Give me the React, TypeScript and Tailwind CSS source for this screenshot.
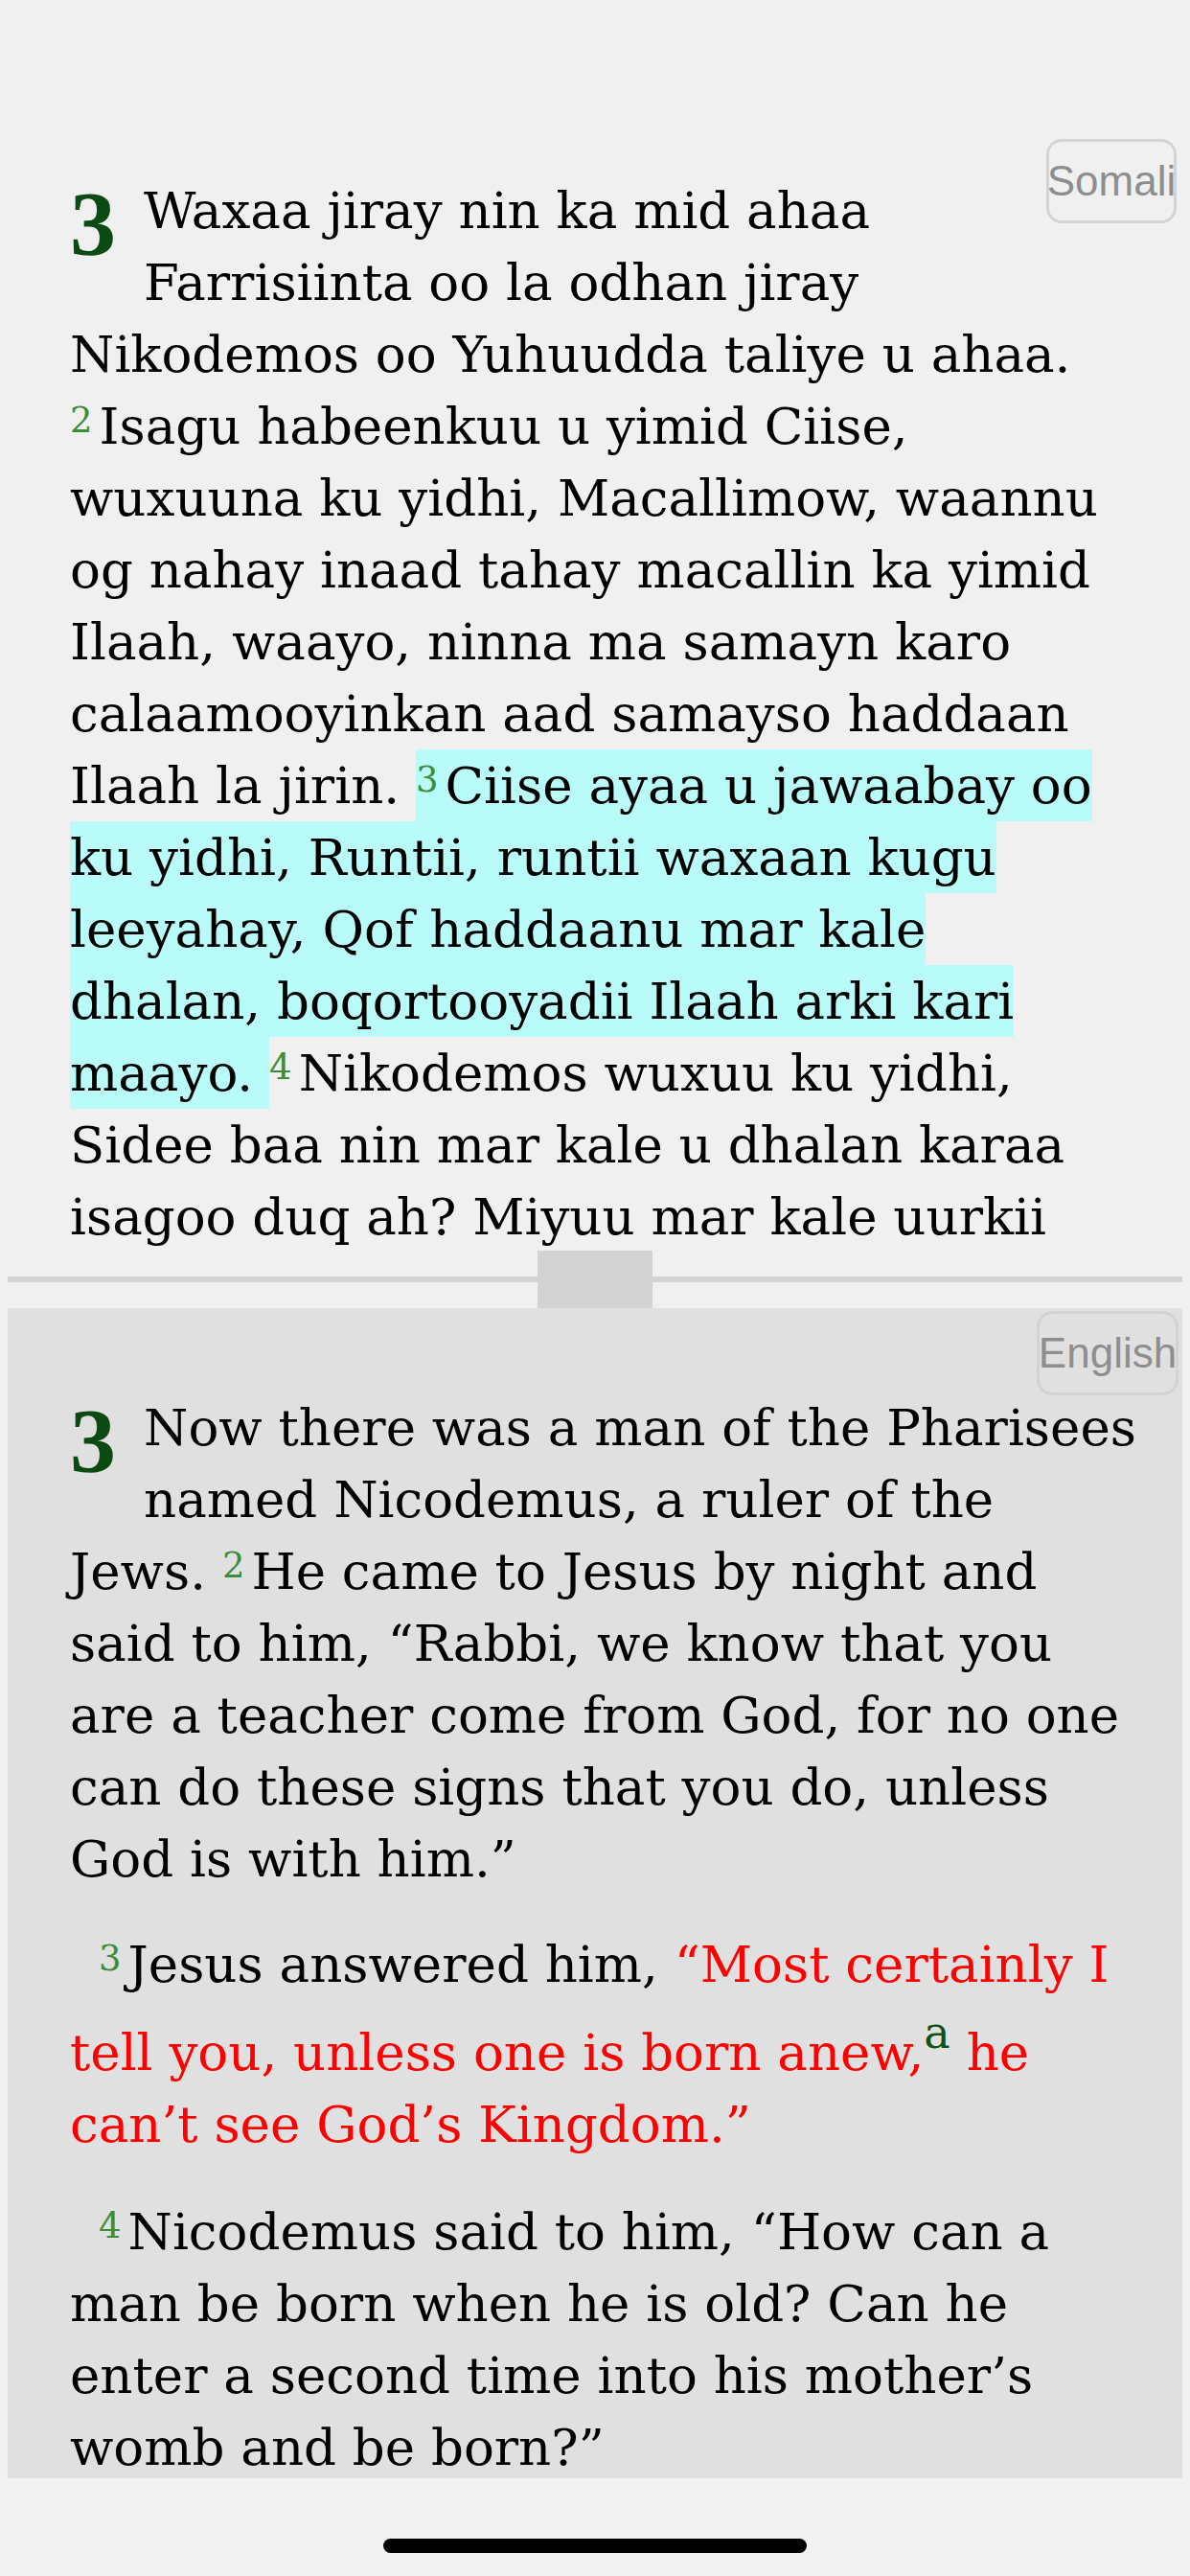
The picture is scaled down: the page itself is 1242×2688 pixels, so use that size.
import type { ReactNode } from 'react';

const serif = { fontFamily: '"DejaVu Serif", "Liberation Serif", serif' };

function Verse({ n }: { n: string }) {
  return (
    <span className="text-[37px] leading-none align-[12px] text-[#3a8d3a] mr-[7px]">{n}</span>
  );
}

function Chapter({ n }: { n: string }) {
  return (
    <div className="float-left w-[77px] h-[148px]">
      <span
        className="block mt-[4px] text-[96px] leading-[96px] font-bold text-[#0b4a12]"
        style={{ fontFamily: '"Liberation Serif", serif' }}
      >
        {n}
      </span>
    </div>
  );
}

function LangButton({ label, className }: { label: string; className: string }) {
  return (
    <button
      className={`absolute top-[3px] h-[88px] border-[3px] border-[#d3d3d3] rounded-[16px] flex items-center justify-center overflow-hidden text-[44px] text-[#8e8e8e] ${className}`}
      style={{ fontFamily: '"Liberation Sans", Arial, sans-serif' }}
    >
      {label}
    </button>
  );
}

function Text({ children }: { children: ReactNode }) {
  return (
    <div className="pl-[65px] pr-[10px] text-[53px] leading-[75px] text-black" style={serif}>
      {children}
    </div>
  );
}

export default function App() {
  return (
    <div className="w-[1242px] h-[2688px] bg-[#f0f0f0] flex flex-col overflow-hidden">
      <div className="h-[142px] shrink-0" />

      {/* Somali */}
      <div className="relative mx-[8px] h-[1163px] shrink-0 overflow-hidden">
        <Text>
          <p className="pt-[40px]">
            <Chapter n="3" />
            Waxaa jiray nin ka mid ahaa
            <br />
            Farrisiinta oo la odhan jiray
            <br />
            Nikodemos oo Yuhuudda taliye u ahaa.
            <br />
            <Verse n="2" />
            Isagu habeenkuu u yimid Ciise,
            <br />
            wuxuuna ku yidhi, Macallimow, waannu
            <br />
            og nahay inaad tahay macallin ka yimid
            <br />
            Ilaah, waayo, ninna ma samayn karo
            <br />
            calaamooyinkan aad samayso haddaan
            <br />
            Ilaah la jirin.{' '}
            <span className="bg-[#b9fbf8] py-[7px]">
              <Verse n="3" />
              Ciise ayaa u jawaabay oo
              <br />
              ku yidhi, Runtii, runtii waxaan kugu
              <br />
              leeyahay, Qof haddaanu mar kale
              <br />
              dhalan, boqortooyadii Ilaah arki kari
              <br />
              maayo.{' '}
            </span>
            <Verse n="4" />
            Nikodemos wuxuu ku yidhi,
            <br />
            Sidee baa nin mar kale u dhalan karaa
            <br />
            isagoo duq ah? Miyuu mar kale uurkii
            <br />
            hooyadiis mar labaad geli karaa, oo ma dhalan karaa?
          </p>
        </Text>
        <LangButton label="Somali" className="right-[6px] w-[136px]" />
      </div>

      {/* divider */}
      <div className="mx-[8px] h-[60px] shrink-0 flex items-center">
        <div className="flex-1 h-[6px] bg-[#d3d3d3]" />
        <div className="w-[120px] h-[60px] bg-[#d3d3d3]" />
        <div className="flex-1 h-[6px] bg-[#d3d3d3]" />
      </div>

      {/* English */}
      <div className="relative mx-[8px] h-[1221px] shrink-0 bg-[#e0e0e0] overflow-hidden">
        <Text>
          <p className="pt-[87px]">
            <Chapter n="3" />
            Now there was a man of the Pharisees
            <br />
            named Nicodemus, a ruler of the
            <br />
            Jews. <Verse n="2" />
            He came to Jesus by night and
            <br />
            said to him, “Rabbi, we know that you
            <br />
            are a teacher come from God, for no one
            <br />
            can do these signs that you do, unless
            <br />
            God is with him.”
          </p>
          <p className="mt-[35px] indent-[30px]">
            <Verse n="3" />
            Jesus answered him,{' '}
            <span className="text-[#ff0000]">
              “Most certainly I
              <br />
              tell you, unless one is born anew,
            </span>
            <span className="text-[46px] leading-[68px] align-[23px] text-[#0b5316]">a</span>
            <span className="text-[#ff0000]">
              {' '}he
              <br />
              can’t see God’s Kingdom.”
            </span>
          </p>
          <p className="mt-[37px] indent-[30px]">
            <Verse n="4" />
            Nicodemus said to him, “How can a
            <br />
            man be born when he is old? Can he
            <br />
            enter a second time into his mother’s
            <br />
            womb and be born?”
          </p>
          <p className="mt-[37px] indent-[30px]">
            <Verse n="5" />
            Jesus answered, “Most certainly I tell you, unless one is born of water and spirit, he can’t enter into God’s Kingdom.”
          </p>
        </Text>
        <LangButton label="English" className="right-[4px] w-[148px]" />
      </div>

      <div className="flex-1 bg-[#f2f2f2] flex flex-col items-center">
        <div className="mt-[63px] w-[442px] h-[15px] rounded-full bg-black" />
      </div>
    </div>
  );
}
